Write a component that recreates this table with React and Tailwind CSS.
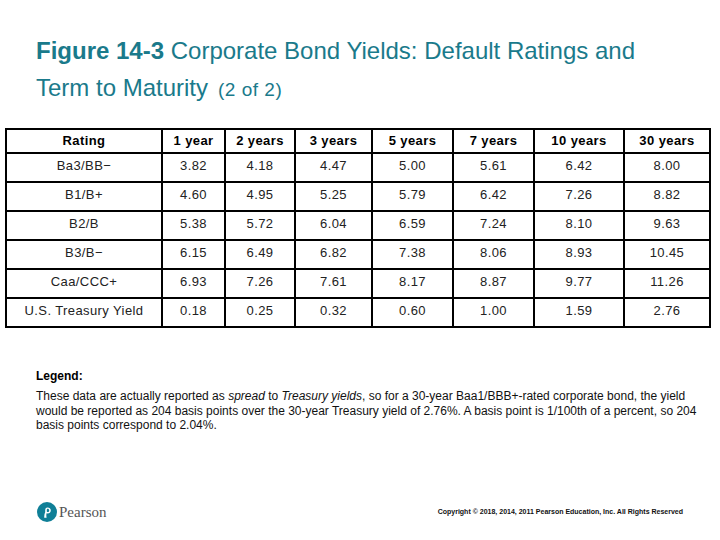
import React from "react";

const cols = [
  { label: "Rating", w: "w-[156px]" },
  { label: "1 year", w: "w-[63px]" },
  { label: "2 years", w: "w-[70px]" },
  { label: "3 years", w: "w-[77px]" },
  { label: "5 years", w: "w-[81px]" },
  { label: "7 years", w: "w-[81px]" },
  { label: "10 years", w: "w-[90px]" },
  { label: "30 years", w: "w-[86px]" },
];

const rows = [
  ["Ba3/BB\u2212", "3.82", "4.18", "4.47", "5.00", "5.61", "6.42", "8.00"],
  ["B1/B+", "4.60", "4.95", "5.25", "5.79", "6.42", "7.26", "8.82"],
  ["B2/B", "5.38", "5.72", "6.04", "6.59", "7.24", "8.10", "9.63"],
  ["B3/B\u2212", "6.15", "6.49", "6.82", "7.38", "8.06", "8.93", "10.45"],
  ["Caa/CCC+", "6.93", "7.26", "7.61", "8.17", "8.87", "9.77", "11.26"],
  ["U.S. Treasury Yield", "0.18", "0.25", "0.32", "0.60", "1.00", "1.59", "2.76"],
];

function PearsonLogo() {
  return (
    <svg width="20" height="20" viewBox="0 0 20 20">
      <circle cx="10" cy="10" r="10" fill="#0f7f97" />
      <path
        d="M7.2 15.8 C7.2 13.5 7.6 11.2 8.2 10.2 L8.2 8 C8.2 6.8 8.8 5.4 10.6 5.4 C12.6 5.4 13.8 6.8 13.8 8.4 C13.8 10.2 12.4 11.4 10.6 11.4 C10 11.4 9.6 11.2 9.6 11.2 C9.2 12.6 9.3 14.4 9.6 15.8 Z M9.8 9.6 C10 10 10.3 10.1 10.7 10.1 C11.6 10.1 12.2 9.3 12.2 8.4 C12.2 7.4 11.5 6.7 10.7 6.7 C10.1 6.7 9.8 7.2 9.8 7.8 Z"
        fill="#ffffff"
      />
    </svg>
  );
}

export default function App() {
  return (
    <div className="w-[720px] h-[540px] bg-white flex flex-col font-['Liberation_Sans',Arial,sans-serif] text-black overflow-hidden">
      <div className="pt-[32px] pl-[36px] text-[#1a7a8b] text-[24px] leading-[37px]">
        <div>
          <span className="font-bold">Figure 14-3</span> Corporate Bond Yields: Default Ratings and
        </div>
        <div>
          Term to Maturity<span className="text-[19px] tracking-[0.5px] ml-[10px]">(2 of 2)</span>
        </div>
      </div>

      <div className="mt-[20px] pl-[5px]">
        <table className="border-collapse border-2 border-black text-[13px] tracking-[0.4px]">
          <thead>
            <tr className="h-[24px]">
              {cols.map((c) => (
                <th
                  key={c.label}
                  className={`${c.w} border-2 border-black font-bold text-center p-0 align-middle`}
                >
                  {c.label}
                </th>
              ))}
            </tr>
          </thead>
          <tbody>
            {rows.map((r, i) => (
              <tr key={i} className="h-[29px]">
                {r.map((v, j) => (
                  <td
                    key={j}
                    className="border-2 border-black text-center p-0 pb-[3px] align-middle text-[#222]"
                  >
                    {v}
                  </td>
                ))}
              </tr>
            ))}
          </tbody>
        </table>
      </div>

      <div className="pl-[36px] mt-[41px]">
        <div className="font-bold text-[12px] leading-[14px]">Legend:</div>
        <p className="mt-[6px] text-[12px] leading-[14.5px] text-[#111]">
          These data are actually reported as <i>spread</i> to <i>Treasury yields</i>, so for a 30-year Baa1/BBB+-rated corporate bond, the yield
          <br />
          would be reported as 204 basis points over the 30-year Treasury yield of 2.76%. A basis point is 1/100th of a percent, so 204
          <br />
          basis points correspond to 2.04%.
        </p>
      </div>

      <div className="mt-auto pb-[17px] pl-[37px] pr-[36px] flex items-center">
        <PearsonLogo />
        <span className="ml-[2px] text-[15px] text-[#555] font-['Liberation_Serif',serif]">Pearson</span>
        <span className="ml-auto mr-[1px] text-[7px] font-bold text-[#111] whitespace-nowrap">
          Copyright © 2018, 2014, 2011 Pearson Education, Inc. All Rights Reserved
        </span>
      </div>
    </div>
  );
}
